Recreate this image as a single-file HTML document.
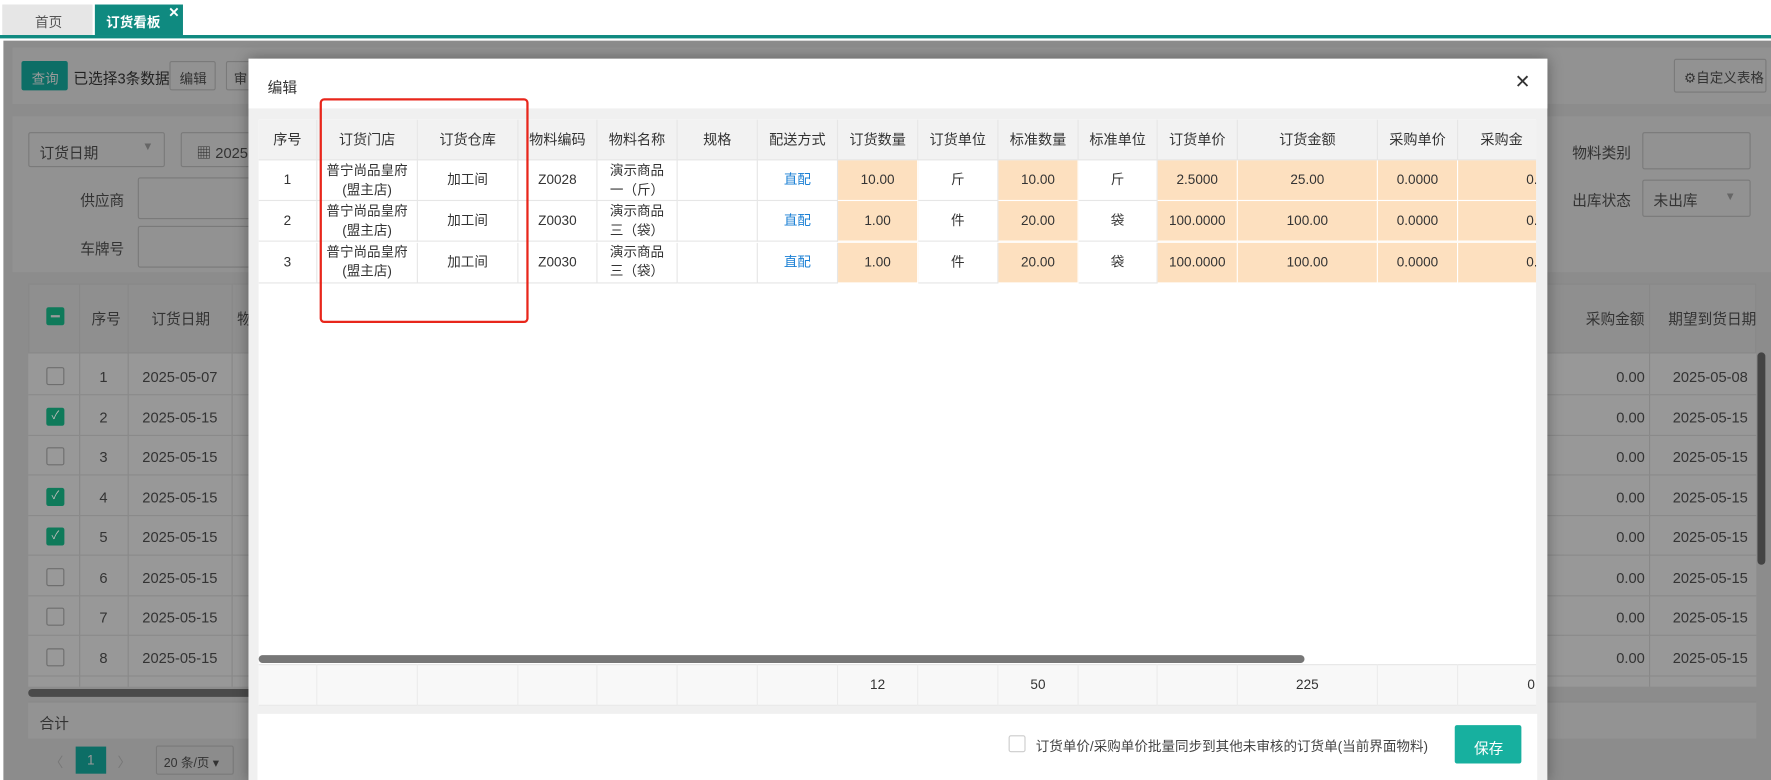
<!DOCTYPE html>
<html><head><meta charset="utf-8">
<style>
*{box-sizing:border-box;margin:0;padding:0}
html,body{width:1771px;height:780px;overflow:hidden;background:#fff;font-family:"Liberation Sans","Noto Sans CJK SC",sans-serif;color:#333}
#w{position:absolute;left:0;top:0;width:1568px;height:691px;transform:scale(1.12946);transform-origin:0 0;overflow:hidden}
.a{position:absolute}
.t{position:absolute;font-size:12px;white-space:nowrap}
.bg{background:#8c8c8c}
.cell{position:absolute;display:flex;align-items:center;justify-content:center;text-align:center;font-size:12px;color:#333;line-height:17px}
.bt{border:1px solid #7a7a7a;border-radius:2px}
.cb{position:absolute;width:16px;height:16px;border:1px solid #6e6e6e;border-radius:2px;background:#999}
.cb.on{background:#0f7a5a;border-color:#0f7a5a}
</style></head><body><div id="w">
<!-- tabs -->
<div class="a" style="left:2px;top:4px;width:80px;height:27px;background:#e6e6e6"></div>
<div class="t" style="left:31px;top:11px;color:#555">首页</div>
<div class="a" style="left:84px;top:4px;width:78px;height:27px;background:#0f8a80"></div>
<div class="t" style="left:94px;top:11px;color:#fff;font-weight:bold">订货看板</div>
<div class="t" style="left:149px;top:4px;color:#fff;font-size:12px;font-weight:bold">✕</div>
<div class="a" style="left:0;top:31px;width:1568px;height:3px;background:#0f8a80"></div>
<!-- dimmed background -->
<div class="a bg" style="left:3px;top:36px;width:1565px;height:655px"></div>
<div class="a" style="left:11px;top:42px;width:1557px;height:50px;background:#929292"></div>
<div class="a" style="left:19px;top:54px;width:41px;height:26px;background:#0d6e66;border-radius:2px"></div>
<div class="t" style="left:28px;top:61px;color:#9a9a9a">查询</div>
<div class="t" style="left:65px;top:59px;font-size:13px;color:#222">已选择3条数据</div>
<div class="a bt" style="left:150px;top:54px;width:41px;height:26px"></div>
<div class="t" style="left:159px;top:61px;color:#333">编辑</div>
<div class="a bt" style="left:200px;top:54px;width:30px;height:26px"></div>
<div class="t" style="left:207px;top:61px;color:#333">审</div>
<div class="a bt" style="left:1482px;top:52px;width:82px;height:30px"></div>
<div class="t" style="left:1491px;top:60px;color:#333">⚙自定义表格</div>
<div class="a" style="left:11px;top:103px;width:1557px;height:138px;background:#929292"></div>
<div class="a bt" style="left:25px;top:117px;width:121px;height:31px"></div>
<div class="t" style="left:35px;top:125px;font-size:13px">订货日期</div>
<div class="t" style="left:126px;top:125px;color:#666;font-size:10px">▼</div>
<div class="a bt" style="left:160px;top:117px;width:80px;height:31px"></div>
<div class="t" style="left:174px;top:125px;font-size:13px">▦ 2025</div>
<div class="t" style="left:71px;top:167px;font-size:13px">供应商</div>
<div class="a bt" style="left:122px;top:157px;width:120px;height:37px"></div>
<div class="t" style="left:71px;top:210px;font-size:13px">车牌号</div>
<div class="a bt" style="left:122px;top:200px;width:120px;height:37px"></div>
<div class="t" style="left:1392px;top:125px;font-size:13px">物料类别</div>
<div class="a bt" style="left:1454px;top:117px;width:96px;height:33px"></div>
<div class="t" style="left:1392px;top:167px;font-size:13px">出库状态</div>
<div class="a bt" style="left:1454px;top:159px;width:96px;height:33px"></div>
<div class="t" style="left:1464px;top:167px;font-size:13px">未出库</div>
<div class="t" style="left:1527px;top:169px;font-size:10px;color:#666">▼</div>
<!-- bg table -->
<div class="a" style="left:25px;top:251px;width:1530px;height:62px;background:#8f8f8f;border:1px solid #888"></div>
<div class="a" style="left:25px;top:313px;width:1530px;height:295px;background:#989898"></div>
<div class="cb on" style="left:41px;top:272px"></div><div class="a" style="left:45px;top:279px;width:8px;height:2px;background:#9a9a9a"></div>
<div class="t" style="left:81px;top:272px;font-size:13px">序号</div>
<div class="t" style="left:134px;top:272px;font-size:13px">订货日期</div>
<div class="t" style="left:210px;top:272px;font-size:13px">物</div>
<div class="t" style="left:1404px;top:272px;font-size:13px">采购金额</div>
<div class="t" style="left:1477px;top:272px;font-size:13px">期望到货日期</div>
<div class="a" style="left:70px;top:251px;width:1px;height:357px;background:#888"></div>
<div class="a" style="left:113px;top:251px;width:1px;height:357px;background:#888"></div>
<div class="a" style="left:205px;top:251px;width:1px;height:357px;background:#888"></div>
<div class="a" style="left:1460px;top:251px;width:1px;height:357px;background:#888"></div>
<div id="bgrows"></div>
<div class="a" style="left:1556px;top:312px;width:7px;height:188px;background:#444;border-radius:4px"></div>
<div class="a" style="left:25px;top:610px;width:200px;height:7px;background:#4a4a4a;border-radius:4px"></div>
<div class="a" style="left:25px;top:621px;width:1530px;height:33px;background:#939393;border-top:1px solid #888"></div>
<div class="t" style="left:35px;top:630px;font-size:13px">合计</div>
<div class="t" style="left:44px;top:666px;color:#777">〈</div>
<div class="a" style="left:67px;top:661px;width:27px;height:24px;background:#0d6e66"></div>
<div class="t" style="left:77px;top:666px;color:#9a9a9a">1</div>
<div class="t" style="left:104px;top:666px;color:#777">〉</div>
<div class="a bt" style="left:138px;top:660px;width:69px;height:26px"></div>
<div class="t" style="left:145px;top:667px;font-size:11px">20 条/页 ▾</div>
<!-- modal -->
<div class="a" style="left:220px;top:52px;width:1150px;height:640px;background:#f0f0f0;box-shadow:0 0 12px rgba(0,0,0,.35)"></div>
<div class="a" style="left:220px;top:52px;width:1150px;height:44px;background:#fff"></div>
<div class="t" style="left:237px;top:67px;font-size:13px;color:#333">编辑</div>
<div class="t" style="left:1341px;top:63px;font-size:17px;color:#333">✕</div>
<div class="a" style="left:229px;top:106px;width:1131px;height:519px;background:#fff;overflow:hidden" id="mt"></div>
<div class="a" style="left:229px;top:580px;width:926px;height:7px;background:#777;border-radius:4px"></div>
<div class="a" style="left:228px;top:632px;width:1133px;height:59px;background:#fff"></div>
<div class="a" style="left:893px;top:651px;width:15px;height:15px;border:1px solid #ccc;border-radius:2px"></div>
<div class="t" style="left:917px;top:652px;color:#444">订货单价/采购单价批量同步到其他未审核的订货单(当前界面物料)</div>
<div class="a" style="left:1288px;top:642px;width:59px;height:34px;background:#17b09f;border-radius:2px"></div>
<div class="t" style="left:1305px;top:652px;color:#fff;font-size:13px">保存</div>
<div class="a" style="left:283px;top:87px;width:185px;height:199px;border:2px solid #e8261b;border-radius:4px"></div>
</div>
<script>
var bg=document.getElementById('bgrows'),h='';
var chk=[0,1,0,1,1,0,0,0],dt=['2025-05-07','2025-05-15','2025-05-15','2025-05-15','2025-05-15','2025-05-15','2025-05-15','2025-05-15'],ex=['2025-05-08'];
for(var i=0;i<8;i++){var y=315+i*35.5;
h+='<div class="a" style="left:25px;top:'+(y+34)+'px;width:1530px;height:1px;background:#8a8a8a"></div>';
h+='<div class="cb'+(chk[i]?' on':'')+'" style="left:41px;top:'+(y+10)+'px;color:#bbb;font-size:10px;line-height:14px;text-align:center">'+(chk[i]?'✓':'')+'</div>';
h+='<div class="t" style="left:88px;top:'+(y+11)+'px;font-size:13px">'+(i+1)+'</div>';
h+='<div class="t" style="left:126px;top:'+(y+11)+'px;font-size:13px">'+dt[i]+'</div>';
h+='<div class="t" style="left:1431px;top:'+(y+11)+'px;font-size:13px">0.00</div>';
h+='<div class="t" style="left:1481px;top:'+(y+11)+'px;font-size:13px">'+(i==0?'2025-05-08':'2025-05-15')+'</div>';}
bg.innerHTML=h;
var m=document.getElementById('mt'),c=[0,52,141,230,300,371,442,513,584,655,726,796,867,991,1062,1140];
var hd=['序号','订货门店','订货仓库','物料编码','物料名称','规格','配送方式','订货数量','订货单位','标准数量','标准单位','订货单价','订货金额','采购单价','采购金'];
var peach=[7,9,11,12,13,14];
var rows=[['1','普宁尚品皇府<br>(盟主店)','加工间','Z0028','演示商品<br>一（斤）','','直配','10.00','斤','10.00','斤','2.5000','25.00','0.0000','0.0'],
['2','普宁尚品皇府<br>(盟主店)','加工间','Z0030','演示商品<br>三（袋）','','直配','1.00','件','20.00','袋','100.0000','100.00','0.0000','0.0'],
['3','普宁尚品皇府<br>(盟主店)','加工间','Z0030','演示商品<br>三（袋）','','直配','1.00','件','20.00','袋','100.0000','100.00','0.0000','0.0']];
var s='<div class="a" style="left:0;top:0;width:1140px;height:36px;background:#f2f2f2;border-bottom:1px solid #e6e6e6"></div>';
for(var k=0;k<15;k++){s+='<div class="cell" style="left:'+c[k]+'px;top:0;width:'+(c[k+1]-c[k])+'px;height:36px;border-right:1px solid #e6e6e6;font-size:12.5px">'+hd[k]+'</div>';}
for(var r=0;r<3;r++){var y=36+r*36.3;
for(var k=0;k<15;k++){var p=peach.indexOf(k)>=0;
s+='<div class="cell" style="left:'+c[k]+'px;top:'+y+'px;width:'+(c[k+1]-c[k])+'px;height:36px;border-right:1px solid #e6e6e6;border-bottom:1px solid #e6e6e6;'+(p?'background:#fde0bf;border-color:#fff;':'')+(k==6?'color:#1a7fd4;':'')+(k==14?'justify-content:flex-end;':'')+'">'+rows[r][k]+'</div>';}}
s+='<div class="a" style="left:0;top:482px;width:1140px;height:37px;background:#f8f8f8;border-top:1px solid #e6e6e6;border-bottom:1px solid #e6e6e6"></div>';
var ft={7:'12',9:'50',12:'225',14:'0'};
for(var k=0;k<15;k++){s+='<div class="cell" style="left:'+c[k]+'px;top:482px;width:'+(c[k+1]-c[k])+'px;height:37px;border-right:1px solid #ececec;'+(k==14?'justify-content:flex-end;padding-right:9px;':'')+'">'+(ft[k]||'')+'</div>';}
m.innerHTML=s;
</script>
</body></html>
